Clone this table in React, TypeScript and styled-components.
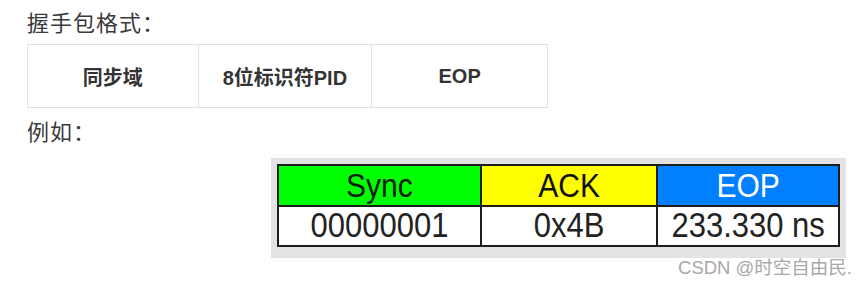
import React from 'react';
import styled, {createGlobalStyle} from "styled-components";

const GlobalStyle = createGlobalStyle`
  body {
    margin: 0;
    background: #fff;
    font-family: "Liberation Sans", "Noto Sans CJK SC", sans-serif;
    color: #333;
  }
`

const fields = [
    {label: '同步域', width: '32.8%'},
    {label: '8位标识符PID', width: '33.4%'},
    {label: 'EOP', width: '33.8%'},
]

const packet = [
    {name: 'Sync', value: '00000001', bg: '#00ff00', color: '#0a1a0a', width: 203},
    {name: 'ACK', value: '0x4B', bg: '#ffff00', color: '#111', width: 178},
    {name: 'EOP', value: '233.330 ns', bg: '#0080ff', color: '#fff', width: 182},
]

const App: React.FC = () => {
    return (
        <Page>
            <GlobalStyle/>
            <Para>握手包格式：</Para>
            <FormatTable>
                <tbody>
                <tr>
                    {fields.map(f => <FormatCell key={f.label} style={{width: f.width}}>{f.label}</FormatCell>)}
                </tr>
                </tbody>
            </FormatTable>
            <Para className="example">例如：</Para>
            <Figure>
                <Capture>
                    <PacketTable>
                        <tbody>
                        <tr>
                            {packet.map(p => (
                                <HeadCell key={p.name} $bg={p.bg} $color={p.color} style={{width: p.width}}>
                                    <Stretch>{p.name}</Stretch>
                                </HeadCell>
                            ))}
                        </tr>
                        <tr>
                            {packet.map(p => (
                                <ValueCell key={p.name}>
                                    <Stretch>{p.value}</Stretch>
                                </ValueCell>
                            ))}
                        </tr>
                        </tbody>
                    </PacketTable>
                </Capture>
                <Watermark>CSDN @时空自由民.</Watermark>
            </Figure>
        </Page>
    );
};

const Page = styled.div`
  padding: 5px 0 0 27px;
  width: 826px;
`

const Para = styled.p`
  margin: 0;
  font-family: "Noto Sans CJK SC", sans-serif;
  font-size: 22px;
  line-height: 32px;
  letter-spacing: 1px;
  color: #3a3a3a;

  &.example {
    margin-top: 6px;
  }
`

const FormatTable = styled.table`
  border-collapse: collapse;
  table-layout: fixed;
  width: 521px;
  margin-top: 7px;
`

const FormatCell = styled.td`
  border: 1px solid #e2e2e2;
  height: 62px;
  padding: 0;
  text-align: center;
  font-weight: bold;
  font-size: 20px;
  color: #333;
`

const Figure = styled.div`
  display: flex;
  flex-direction: column;
  align-items: flex-end;
  margin-top: 12px;
`

const Capture = styled.div`
  background: #e3e3e3;
  width: 575px;
  height: 100px;
  padding: 6px 6px 0 6px;
  box-sizing: border-box;
  margin-right: 7px;
`

const PacketTable = styled.table`
  border-collapse: collapse;
  width: 563px;
  border: 2px solid #1c1c1c;
  font-family: "Liberation Sans", sans-serif;
`

const HeadCell = styled.td<{ $bg: string, $color: string }>`
  background: ${p => p.$bg};
  color: ${p => p.$color};
  border: 2px solid #1c1c1c;
  height: 39px;
  padding: 0;
  text-align: center;
  font-size: 30px;
  line-height: 39px;
  overflow: hidden;
`

const ValueCell = styled.td`
  background: #fff;
  color: #222;
  border: 2px solid #1c1c1c;
  height: 38px;
  padding: 0;
  text-align: center;
  font-size: 31px;
  line-height: 38px;
  overflow: hidden;
`

const Stretch = styled.span`
  display: inline-block;
  transform: scaleY(1.12);
`

const Watermark = styled.div`
  margin-top: 0;
  margin-right: 1px;
  font-family: "Liberation Sans", "Noto Sans CJK SC", sans-serif;
  font-size: 18.5px;
  line-height: 20px;
  color: #a8a8a8;
`

export default App;
